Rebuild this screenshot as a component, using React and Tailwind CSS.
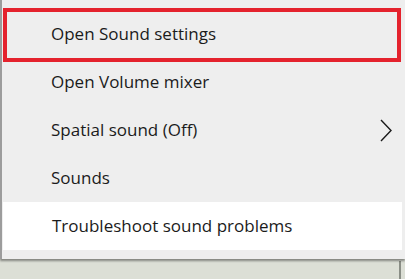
const items = [
  { label: "Open Sound settings" },
  { label: "Open Volume mixer" },
  { label: "Spatial sound (Off)", submenu: true },
  { label: "Sounds" },
  { label: "Troubleshoot sound problems", hover: true },
];

function Chevron() {
  return (
    <svg width="12" height="23" viewBox="0 0 12 23" fill="none" stroke="#1a1a1a" strokeWidth="1.4">
      <path d="M1 1 L11 11.5 L1 22" />
    </svg>
  );
}

export default function App() {
  return (
    <div className="w-[405px] h-[279px] bg-[#dcdfd6] overflow-hidden relative" style={{ fontFamily: '"Open Sans", "Noto Sans", sans-serif' }}>
      <div className="w-[405px] h-[259px] bg-[#eeeeee] border-l-2 border-[#9c9c9c] pt-[10px] shadow-[0_2px_2px_rgba(0,0,0,0.4)] relative z-10">
        {items.map((it) => (
          <div
            key={it.label}
            className={
              "h-[48px] flex items-center justify-between pl-[49px] pr-[13px] text-[17px] text-[#1b1b1b] " +
              (it.hover ? "bg-white ml-[1px] mr-[3px] pl-[48px] pr-[10px]" : "")
            }
          >
            <span>{it.label}</span>
            {it.submenu && <Chevron />}
          </div>
        ))}
        {/* red highlight annotation */}
        <div className="absolute left-[1px] top-[8px] w-[398px] h-[54px] border-[4px] border-[#e4222d]" />
      </div>
      <div className="absolute left-[399px] top-[261px] w-[2px] h-[18px] bg-[#8a8e86]" />
    </div>
  );
}
